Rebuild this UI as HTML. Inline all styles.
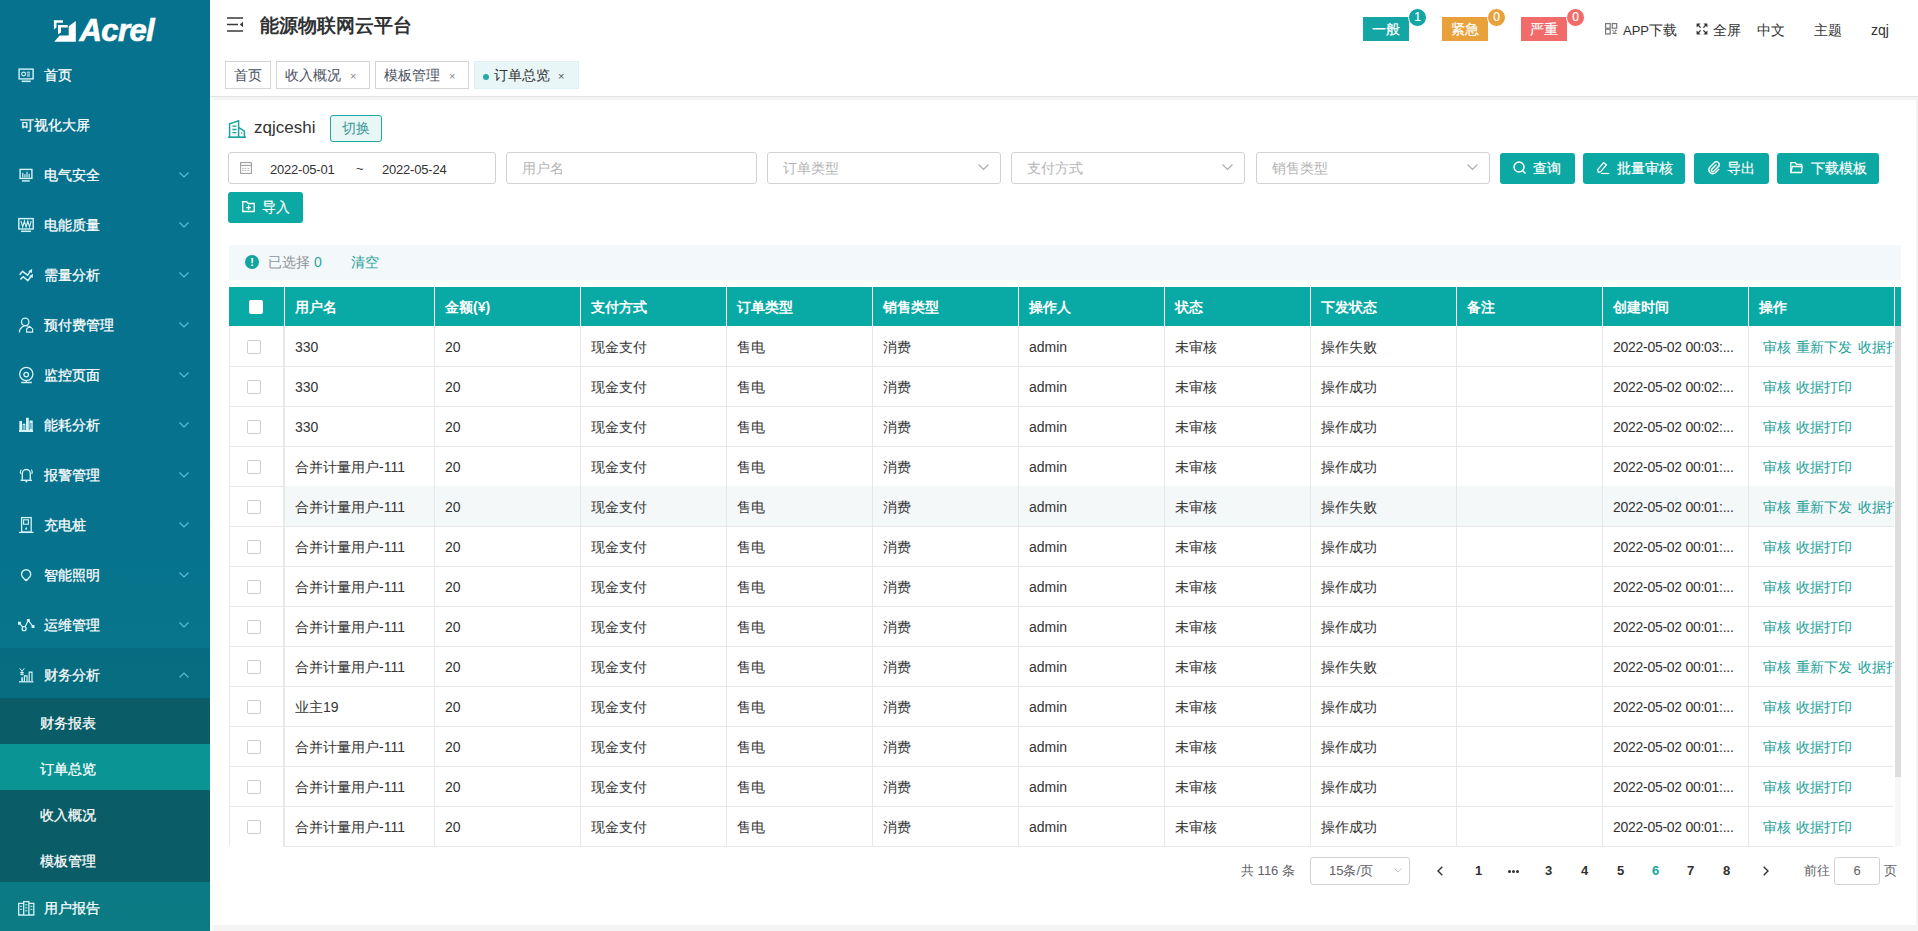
<!DOCTYPE html><html><head><meta charset="utf-8"><style>
*{margin:0;padding:0;box-sizing:border-box}
html,body{width:1918px;height:931px;overflow:hidden;background:#f4f4f4;font-family:"Liberation Sans",sans-serif;color:#333}
div,span{position:absolute;white-space:nowrap}
svg{position:absolute;overflow:visible}
#side{left:0;top:0;width:210px;height:931px;background:linear-gradient(180deg,#06728e 0%,#06728d 55%,#08768a 75%,#0c7b83 100%)}
.mt{color:#fff;font-size:14px;line-height:20px;-webkit-text-stroke:0.25px #fff}
.sub{left:0;width:210px;height:46px;background:#0a5d66}
#hdr{left:210px;top:0;width:1708px;height:97px;background:#fff;border-bottom:1px solid #e2e2e2}
#card{left:213px;top:100px;width:1703px;height:825px;background:#fff}
.tag{top:61px;height:28px;border:1px solid #d4d4d4;background:#fff;color:#495060;font-size:14px;line-height:28px}
.inp{top:152px;height:32px;border:1px solid #d2d2d2;border-radius:3px;background:#fff}
.ph{color:#b4b4b4;font-size:14px;line-height:20px;top:5px}
.btn{height:30.6px;background:#0ca8a3;border-radius:3px;color:#fff;font-size:14px;line-height:20px;-webkit-text-stroke:0.2px #fff}
.th{color:#fff;font-size:14px;font-weight:bold;line-height:20px}
.td{color:#333;font-size:14px;line-height:20px}
.op{color:#1d9f9a;font-size:14px;line-height:20px}
.pg{color:#303133;font-size:13px;font-weight:bold;line-height:20px}
</style></head><body>
<div id="side">
<svg style="left:50px;top:15px" width="30" height="30" viewBox="0 0 30 30"><path fill="#fff" d="M3.9 5.2H12.9V7.7H6.5V12.5L3.9 14.5Z"/><path fill="#fff" d="M8 10H17.7V12.6H11V17.5L8 19.5Z"/><path fill="#fff" d="M25.8 6.1V26.8H4.2L9.7 20.5H18.7V11.3Z"/></svg>
<div style="left:79.5px;top:14px;font-size:31px;line-height:34px;font-weight:bold;font-style:italic;color:#fff;letter-spacing:-0.6px;-webkit-text-stroke:0.7px #fff">Acrel</div>
<div style="left:0;top:648px;width:210px;height:50px;background:rgba(0,0,0,0.07)"></div>
<svg style="left:0;top:50px" width="50" height="50" viewBox="0 50 50 50" fill="none" stroke="#d2f3f9"><rect x="19.1" y="69.1" width="14" height="9.8" stroke-width="1.4"/><path d="M21.7 81.3h9" stroke-width="1.6"/><circle cx="23.6" cy="74" r="1.9" stroke-width="1.1"/><path d="M26.8 72.2h3.3M26.8 74.1h3.3M26.8 76h3.3" stroke-width="1"/></svg>
<div class="mt" style="left:44px;top:65px">首页</div>
<div class="mt" style="left:20px;top:115px">可视化大屏</div>
<svg style="left:0;top:150px" width="50" height="50" viewBox="0 150 50 50" fill="none" stroke="#d2f3f9"><rect x="20.1" y="169.4" width="11.8" height="9" stroke-width="1.4"/><path d="M22 180.9h7.7" stroke-width="1.5"/><path d="M22.8 172.8v4.6M24.9 174.3v3.1M27 171.8v5.6M29.2 173.8v3.6" stroke-width="1.2"/></svg>
<div class="mt" style="left:44px;top:165px">电气安全</div>
<svg style="left:179px;top:172px" width="10" height="6" viewBox="0 0 10 6"><path d="M0.5 0.5L5 5 9.5 0.5" fill="none" stroke="#5cc0d9" stroke-width="1.1"/></svg>
<svg style="left:0;top:200px" width="50" height="50" viewBox="0 200 50 50" fill="none" stroke="#d2f3f9"><rect x="18.8" y="218.6" width="14.4" height="10.4" stroke-width="1.4"/><path d="M21 231.3h10" stroke-width="1.5"/><path d="M21 221l1.7 6 1.7-6 1.7 6 1.7-6 1.7 6 1.7-6" stroke-width="1.1"/></svg>
<div class="mt" style="left:44px;top:215px">电能质量</div>
<svg style="left:179px;top:222px" width="10" height="6" viewBox="0 0 10 6"><path d="M0.5 0.5L5 5 9.5 0.5" fill="none" stroke="#5cc0d9" stroke-width="1.1"/></svg>
<svg style="left:0;top:250px" width="50" height="50" viewBox="0 250 50 50" fill="none" stroke="#d2f3f9"><path d="M19.6 274.8l3-3.5 4.9 3.9 3.4-4.6M20.4 279.4l2.9-2.6 4.5 3.8 4.1-5.4" stroke-width="1.5"/><path d="M32.2 268.8l-0.3 4.3-3.6-1.9z M33 273.8l-0.3 4.3-3.6-1.9z" fill="#d2f3f9" stroke="none"/></svg>
<div class="mt" style="left:44px;top:265px">需量分析</div>
<svg style="left:179px;top:272px" width="10" height="6" viewBox="0 0 10 6"><path d="M0.5 0.5L5 5 9.5 0.5" fill="none" stroke="#5cc0d9" stroke-width="1.1"/></svg>
<svg style="left:0;top:300px" width="50" height="50" viewBox="0 300 50 50" fill="none" stroke="#d2f3f9"><circle cx="25.2" cy="321.9" r="3.7" stroke-width="1.3"/><path d="M19.4 332.4a6.6 6.6 0 0 1 8.8-6.3" stroke-width="1.3"/><path d="M26.6 328.9l3-2.7 3 2.7v3.2h-6z" stroke-width="1.2"/></svg>
<div class="mt" style="left:44px;top:315px">预付费管理</div>
<svg style="left:179px;top:322px" width="10" height="6" viewBox="0 0 10 6"><path d="M0.5 0.5L5 5 9.5 0.5" fill="none" stroke="#5cc0d9" stroke-width="1.1"/></svg>
<svg style="left:0;top:350px" width="50" height="50" viewBox="0 350 50 50" fill="none" stroke="#d2f3f9"><circle cx="26.3" cy="374" r="6.6" stroke-width="1.3"/><circle cx="26.2" cy="374.6" r="2.3" stroke-width="1.3"/><path d="M21.2 382.5h10.6M26.3 380.6v1.9" stroke-width="1.3"/></svg>
<div class="mt" style="left:44px;top:365px">监控页面</div>
<svg style="left:179px;top:372px" width="10" height="6" viewBox="0 0 10 6"><path d="M0.5 0.5L5 5 9.5 0.5" fill="none" stroke="#5cc0d9" stroke-width="1.1"/></svg>
<svg style="left:0;top:400px" width="50" height="50" viewBox="0 400 50 50" fill="none" stroke="#d2f3f9"><path d="M19.3 421h2.7v10.5h-2.7zM22.6 423.8h2.7v7.7h-2.7zM26 417.8h2.8v13.7h-2.8zM29.5 420.5h3.2v11h-3.2zM19 430h14v2h-14z" fill="#d2f3f9" stroke="none"/><path d="M23.9 425v5M30.9 423v6" stroke="#0a6f8c" stroke-width="0.8"/></svg>
<div class="mt" style="left:44px;top:415px">能耗分析</div>
<svg style="left:179px;top:422px" width="10" height="6" viewBox="0 0 10 6"><path d="M0.5 0.5L5 5 9.5 0.5" fill="none" stroke="#5cc0d9" stroke-width="1.1"/></svg>
<svg style="left:0;top:450px" width="50" height="50" viewBox="0 450 50 50" fill="none" stroke="#d2f3f9"><path d="M22.3 479.8v-6.3a4 4 0 0 1 8 0v6.3" stroke-width="1.4"/><path d="M20.6 480.3h11.4" stroke-width="1.4"/><circle cx="26.3" cy="481.6" r="1" fill="#d2f3f9" stroke="none"/><path d="M21.2 469.5a4.5 4.5 0 0 0-0.4 4.5M31.4 469.5a4.5 4.5 0 0 1 0.4 4.5" stroke-width="1.1"/></svg>
<div class="mt" style="left:44px;top:465px">报警管理</div>
<svg style="left:179px;top:472px" width="10" height="6" viewBox="0 0 10 6"><path d="M0.5 0.5L5 5 9.5 0.5" fill="none" stroke="#5cc0d9" stroke-width="1.1"/></svg>
<svg style="left:0;top:500px" width="50" height="50" viewBox="0 500 50 50" fill="none" stroke="#d2f3f9"><rect x="21.6" y="517.6" width="9.6" height="14.4" stroke-width="1.3"/><rect x="23.6" y="519.8" width="4.8" height="4.4" stroke-width="1.1"/><path d="M26.4 526.8l-1.6 2.6h2.6z" fill="#d2f3f9" stroke="none"/><path d="M19 532.4h14.6" stroke-width="1.3"/></svg>
<div class="mt" style="left:44px;top:515px">充电桩</div>
<svg style="left:179px;top:522px" width="10" height="6" viewBox="0 0 10 6"><path d="M0.5 0.5L5 5 9.5 0.5" fill="none" stroke="#5cc0d9" stroke-width="1.1"/></svg>
<svg style="left:0;top:550px" width="50" height="50" viewBox="0 550 50 50" fill="none" stroke="#d2f3f9"><path d="M23.7 578.2a4.6 4.6 0 1 1 4.8 0l-1 1.4h-2.8z" stroke-width="1.4"/><circle cx="26.1" cy="580" r="1.3" fill="#d2f3f9" stroke="none"/></svg>
<div class="mt" style="left:44px;top:565px">智能照明</div>
<svg style="left:179px;top:572px" width="10" height="6" viewBox="0 0 10 6"><path d="M0.5 0.5L5 5 9.5 0.5" fill="none" stroke="#5cc0d9" stroke-width="1.1"/></svg>
<svg style="left:0;top:600px" width="50" height="50" viewBox="0 600 50 50" fill="none" stroke="#d2f3f9"><path d="M19.4 623.2l4.7 5.5 4.2-8.4 4.7 6.2" stroke-width="1.2"/><path d="M18 621.8h2.9v2.9h-2.9zM26.9 618.9h2.9v2.9h-2.9zM31.6 625.1h2.9v2.9h-2.9z" fill="#d2f3f9" stroke="none"/><circle cx="24.1" cy="628.7" r="2" fill="#096f88" stroke-width="1.3"/></svg>
<div class="mt" style="left:44px;top:615px">运维管理</div>
<svg style="left:179px;top:622px" width="10" height="6" viewBox="0 0 10 6"><path d="M0.5 0.5L5 5 9.5 0.5" fill="none" stroke="#5cc0d9" stroke-width="1.1"/></svg>
<svg style="left:0;top:650px" width="50" height="50" viewBox="0 650 50 50" fill="none" stroke="#d2f3f9"><path d="M19.7 668.3l2.3 3 2.3-3M22 671.3v4.2M20.2 672.6h3.6M20.2 674.2h3.6" stroke-width="1"/><path d="M21.3 677.2h1.6v4h-1.6z" fill="#d2f3f9" stroke="none"/><path d="M24.4 681.2v-5.3h2.6v5.3M29.2 681.2v-9h2.8v9" stroke-width="1.2"/><path d="M19 681.8h14.4" stroke-width="1.3"/></svg>
<div class="mt" style="left:44px;top:665px">财务分析</div>
<svg style="left:179px;top:672px" width="10" height="6" viewBox="0 0 10 6"><path d="M0.5 5.5L5 1 9.5 5.5" fill="none" stroke="#5cc0d9" stroke-width="1.1"/></svg>
<div class="sub" style="top:698px;background:#0a5d66"><div class="mt" style="left:40px;top:15px">财务报表</div></div>
<div class="sub" style="top:744px;background:#0a9594"><div class="mt" style="left:40px;top:15px">订单总览</div></div>
<div class="sub" style="top:790px;background:#0a5d66"><div class="mt" style="left:40px;top:15px">收入概况</div></div>
<div class="sub" style="top:836px;background:#0a5d66"><div class="mt" style="left:40px;top:15px">模板管理</div></div>
<svg style="left:0;top:883px" width="50" height="50" viewBox="0 883 50 50" fill="none" stroke="#d2f3f9"><path d="M18.7 903.3h5v11.7h-5zM23.7 901.7h5.2v13.5h-5.2zM28.9 903.3h4.9v11.7h-4.9z" stroke-width="1.3"/><path d="M20.2 906.3h2M20.2 909.3h2M25.2 904.8h2.2M25.2 907.8h2.2M25.2 910.8h2.2M30.4 906.3h2M30.4 909.3h2" stroke-width="1"/></svg>
<div class="mt" style="left:44px;top:898px">用户报告</div>
</div>
<div id="hdr"></div>
<svg style="left:227px;top:17px" width="17" height="15" viewBox="0 0 17 15"><path d="M0 1h16M0 7.5h11M0 14h16" stroke="#3a3a3a" stroke-width="1.5"/><path d="M16 4.8v5.4l-3.2-2.7z" fill="#3a3a3a"/></svg>
<div style="left:260px;top:14px;font-size:19px;line-height:24px;font-weight:bold;color:#303133">能源物联网云平台</div>
<div class="tag" style="left:225px;width:46px"></div>
<div class="tag" style="left:234px;border:0;background:none">首页</div>
<div class="tag" style="left:276px;width:94px"></div>
<div class="tag" style="left:285px;border:0;background:none">收入概况</div>
<div style="left:350px;top:65.5px;font-size:11px;line-height:20px;color:#888">×</div>
<div class="tag" style="left:375px;width:94px"></div>
<div class="tag" style="left:384px;border:0;background:none">模板管理</div>
<div style="left:449px;top:65.5px;font-size:11px;line-height:20px;color:#888">×</div>
<div class="tag" style="left:474px;width:105px;background:#e8f6f7;border-color:#dff1f2;color:#333"></div>
<div style="left:483px;top:73.5px;width:6px;height:6px;border-radius:3px;background:#26aaa5"></div>
<div class="tag" style="left:494px;border:0;background:none;color:#333">订单总览</div>
<div style="left:558px;top:65.5px;font-size:11px;line-height:20px;color:#555">×</div>
<div style="left:1363px;top:17px;width:46px;height:24px;background:#13a6a4;color:#fff;font-size:14px;line-height:24px;text-align:center;-webkit-text-stroke:0.2px #fff">一般</div>
<div style="left:1408px;top:7.5px;width:19px;height:19px;border-radius:10px;background:#13a6a4;border:1px solid #fff;color:#fff;font-size:12px;line-height:16px;text-align:center;-webkit-text-stroke:0.2px #fff">1</div>
<div style="left:1442px;top:17px;width:46px;height:24px;background:#e9a23b;color:#fff;font-size:14px;line-height:24px;text-align:center;-webkit-text-stroke:0.2px #fff">紧急</div>
<div style="left:1487px;top:7.5px;width:19px;height:19px;border-radius:10px;background:#e9a23b;border:1px solid #fff;color:#fff;font-size:12px;line-height:16px;text-align:center;-webkit-text-stroke:0.2px #fff">0</div>
<div style="left:1521px;top:17px;width:46px;height:24px;background:#f26b6b;color:#fff;font-size:14px;line-height:24px;text-align:center;-webkit-text-stroke:0.2px #fff">严重</div>
<div style="left:1566px;top:7.5px;width:19px;height:19px;border-radius:10px;background:#f26b6b;border:1px solid #fff;color:#fff;font-size:12px;line-height:16px;text-align:center;-webkit-text-stroke:0.2px #fff">0</div>
<svg style="left:1604px;top:22px" width="14" height="13" viewBox="0 0 14 13"><rect x="1.6" y="1.6" width="4.6" height="4.6" fill="none" stroke="#777" stroke-width="1.2"/><rect x="1.6" y="7.2" width="4.6" height="4.8" fill="none" stroke="#777" stroke-width="1.2"/><rect x="8.3" y="1.6" width="4.4" height="4.6" fill="none" stroke="#777" stroke-width="1.2"/><path d="M8.3 8.4h1.2M11 8.4h1.7M8.3 11.5h4.4M9 10h3" stroke="#777" stroke-width="1.1"/></svg>
<div style="left:1623px;top:20px;font-size:14px;line-height:20px;color:#333"><span style="position:static;font-size:13px">APP</span>下载</div>
<svg style="left:1696px;top:23px" width="12" height="12" viewBox="0 0 12 12"><path d="M0.6 0.6h4L0.6 4.6z M11.4 0.6h-4l4 4z M0.6 11.4v-4l4 4z M11.4 11.4h-4l4-4z" fill="#333"/><path d="M2 2l2.6 2.6M10 2L7.4 4.6M2 10l2.6-2.6M10 10L7.4 7.4" stroke="#333" stroke-width="1.3"/></svg>
<div style="left:1713px;top:20px;font-size:14px;line-height:20px;color:#333">全屏</div>
<div style="left:1757px;top:20px;font-size:14px;line-height:20px;color:#333">中文</div>
<div style="left:1814px;top:20px;font-size:14px;line-height:20px;color:#333">主题</div>
<div style="left:1871px;top:20px;font-size:14px;line-height:20px;color:#333">zqj</div>
<div id="card"></div>
<div style="left:210px;top:97px;width:3px;height:834px;background:#fcfcfc"></div>
<svg style="left:0;top:0" width="260" height="150" viewBox="0 0 260 150" fill="none" stroke="#1ba39c"><path d="M229.6 137V123.9L238.6 120.7V137M238.6 127.3L244.4 131.1V137" stroke-width="1.5"/><path d="M228.2 137.2h17.7" stroke-width="1.7"/><path d="M232.4 126.2h4.1M232.4 129.5h4.1M232.4 132.7h4.1" stroke-width="1.3"/><circle cx="241.6" cy="133" r="0.8" fill="#1ba39c" stroke="none"/></svg>
<div style="left:254px;top:117px;font-size:17px;line-height:22px;color:#333">zqjceshi</div>
<div style="left:330px;top:115px;width:52px;height:27px;background:#e8f6f6;border:1px solid #20a9a4;border-radius:3px;color:#3d9895;font-size:14px;line-height:25px;text-align:center">切换</div>
<div class="inp" style="left:228px;width:268px"></div>
<svg style="left:240px;top:162px" width="12" height="12" viewBox="0 0 12 12"><rect x="0.6" y="0.6" width="10.8" height="10.8" fill="none" stroke="#a0a0a0" stroke-width="1.1"/><path d="M0.6 3.4h10.8" stroke="#a0a0a0" stroke-width="1.1"/><path d="M2.2 6.4h1.6M4.8 6.4h1.6M7.6 6.4h1.6M2.2 8.5h1.6M4.8 8.5h1.6M7.6 8.5h1.6" stroke="#a8a8a8" stroke-width="0.9"/></svg>
<div style="left:270px;top:160px;font-size:13px;line-height:20px;color:#333;letter-spacing:-0.2px">2022-05-01</div>
<div style="left:356px;top:159px;font-size:13px;line-height:20px;color:#333">~</div>
<div style="left:382px;top:160px;font-size:13px;line-height:20px;color:#333;letter-spacing:-0.2px">2022-05-24</div>
<div class="inp" style="left:506px;width:251px"><div class="ph" style="left:15px">用户名</div></div>
<div class="inp" style="left:767px;width:234px"><div class="ph" style="left:15px">订单类型</div></div>
<svg style="left:978px;top:164px" width="11" height="6" viewBox="0 0 11 6"><path d="M0.5 0.5L5.5 5.5 10.5 0.5" fill="none" stroke="#a8abb2" stroke-width="1.1"/></svg>
<div class="inp" style="left:1011px;width:234px"><div class="ph" style="left:15px">支付方式</div></div>
<svg style="left:1222px;top:164px" width="11" height="6" viewBox="0 0 11 6"><path d="M0.5 0.5L5.5 5.5 10.5 0.5" fill="none" stroke="#a8abb2" stroke-width="1.1"/></svg>
<div class="inp" style="left:1256px;width:234px"><div class="ph" style="left:15px">销售类型</div></div>
<svg style="left:1467px;top:164px" width="11" height="6" viewBox="0 0 11 6"><path d="M0.5 0.5L5.5 5.5 10.5 0.5" fill="none" stroke="#a8abb2" stroke-width="1.1"/></svg>
<div class="btn" style="left:1500px;top:153px;width:75px"></div>
<svg style="left:1513px;top:161px" width="14" height="14" viewBox="0 0 14 14"><circle cx="6" cy="6" r="5" fill="none" stroke="#fff" stroke-width="1.5"/><path d="M9.5 9.5l3 3" stroke="#fff" stroke-width="1.5"/></svg>
<div class="btn" style="left:1533px;top:158px;background:none;height:20px">查询</div>
<div class="btn" style="left:1583px;top:153px;width:102px"></div>
<svg style="left:1596px;top:161px" width="14" height="14" viewBox="0 0 14 14"><path d="M2.3 11.3L1.7 8.6 7.6 1.6 10.4 3.9 4.5 10.9Z" fill="none" stroke="#fff" stroke-width="1.3"/><path d="M5.2 12.5H13.3" stroke="#fff" stroke-width="1.2"/></svg>
<div class="btn" style="left:1617px;top:158px;background:none;height:20px">批量审核</div>
<div class="btn" style="left:1694px;top:153px;width:75px"></div>
<svg style="left:1707px;top:161px" width="14" height="14" viewBox="0 0 14 14"><path d="M9.5 3.5L4.5 8.5a1.5 1.5 0 0 0 2 2l5.5-5.5a3 3 0 0 0-4-4L2.5 6.5a4 4 0 0 0 5.5 5.5l4-4" fill="none" stroke="#fff" stroke-width="1.4"/></svg>
<div class="btn" style="left:1727px;top:158px;background:none;height:20px">导出</div>
<div class="btn" style="left:1777px;top:153px;width:102px"></div>
<svg style="left:1790px;top:161px" width="14" height="14" viewBox="0 0 14 14"><path d="M0.8 11.5V1.6h4.4l1.5 1.8h4.9v1.9" fill="none" stroke="#fff" stroke-width="1.3"/><path d="M2.3 5.5h9.9l-0.7 6H0.8z" fill="none" stroke="#fff" stroke-width="1.3"/></svg>
<div class="btn" style="left:1811px;top:158px;background:none;height:20px">下载模板</div>
<div class="btn" style="left:228px;top:192px;width:75px"></div>
<svg style="left:241px;top:200px" width="14" height="14" viewBox="0 0 14 14"><path d="M1.7 1.7h4l1.5 1.8h6v8H1.7z" fill="none" stroke="#fff" stroke-width="1.4"/><path d="M7.6 5.3v4.6M5.3 7.6h4.6" stroke="#fff" stroke-width="1.4"/></svg>
<div class="btn" style="left:262px;top:197px;background:none;height:20px">导入</div>
<div style="left:229px;top:245px;width:1672px;height:35px;background:#f3f9fa"></div>
<div style="left:245px;top:255px;width:14px;height:14px;border-radius:7px;background:#15a59f;color:#fff;font-size:11px;line-height:15px;text-align:center;font-weight:bold">!</div>
<div style="left:268px;top:252px;font-size:14px;line-height:20px;color:#909399">已选择 <span style="position:static;color:#26a6a0">0</span></div>
<div style="left:351px;top:252px;font-size:14px;line-height:20px;color:#1d9f9a">清空</div>
<div style="left:229px;top:287px;width:1672px;height:39px;background:#09a9a5"></div>
<div style="left:284px;top:287px;width:1px;height:39px;background:#fff"></div>
<div style="left:434px;top:287px;width:1px;height:39px;background:#fff"></div>
<div style="left:580px;top:287px;width:1px;height:39px;background:#fff"></div>
<div style="left:726px;top:287px;width:1px;height:39px;background:#fff"></div>
<div style="left:872px;top:287px;width:1px;height:39px;background:#fff"></div>
<div style="left:1018px;top:287px;width:1px;height:39px;background:#fff"></div>
<div style="left:1164px;top:287px;width:1px;height:39px;background:#fff"></div>
<div style="left:1310px;top:287px;width:1px;height:39px;background:#fff"></div>
<div style="left:1456px;top:287px;width:1px;height:39px;background:#fff"></div>
<div style="left:1602px;top:287px;width:1px;height:39px;background:#fff"></div>
<div style="left:1748px;top:287px;width:1px;height:39px;background:#fff"></div>
<div style="left:1894px;top:287px;width:1px;height:39px;background:#fff"></div>
<div class="th" style="left:295px;top:297px">用户名</div>
<div class="th" style="left:445px;top:297px">金额(¥)</div>
<div class="th" style="left:591px;top:297px">支付方式</div>
<div class="th" style="left:737px;top:297px">订单类型</div>
<div class="th" style="left:883px;top:297px">销售类型</div>
<div class="th" style="left:1029px;top:297px">操作人</div>
<div class="th" style="left:1175px;top:297px">状态</div>
<div class="th" style="left:1321px;top:297px">下发状态</div>
<div class="th" style="left:1467px;top:297px">备注</div>
<div class="th" style="left:1613px;top:297px">创建时间</div>
<div class="th" style="left:1759px;top:297px">操作</div>
<div style="left:249px;top:300px;width:14px;height:14px;background:#fff;border-radius:2px"></div>
<div style="left:229px;top:366px;width:1665px;height:1px;background:#e8e8e8"></div>
<div style="left:247px;top:340px;width:14px;height:14px;border:1px solid #cfcfcf;border-radius:2px;background:#fff"></div>
<div class="td" style="left:295px;top:337px">330</div>
<div class="td" style="left:445px;top:337px">20</div>
<div class="td" style="left:591px;top:337px">现金支付</div>
<div class="td" style="left:737px;top:337px">售电</div>
<div class="td" style="left:883px;top:337px">消费</div>
<div class="td" style="left:1029px;top:337px">admin</div>
<div class="td" style="left:1175px;top:337px">未审核</div>
<div class="td" style="left:1321px;top:337px">操作失败</div>
<div class="td" style="left:1613px;top:337px;letter-spacing:-0.28px">2022-05-02 00:03:...</div>
<div style="left:1749px;top:337px;width:145px;height:20px;overflow:hidden"><div class="op" style="left:14px;top:0">审核</div><div class="op" style="left:47px;top:0">重新下发</div><div class="op" style="left:109px;top:0">收据打印</div></div>
<div style="left:229px;top:406px;width:1665px;height:1px;background:#e8e8e8"></div>
<div style="left:247px;top:380px;width:14px;height:14px;border:1px solid #cfcfcf;border-radius:2px;background:#fff"></div>
<div class="td" style="left:295px;top:377px">330</div>
<div class="td" style="left:445px;top:377px">20</div>
<div class="td" style="left:591px;top:377px">现金支付</div>
<div class="td" style="left:737px;top:377px">售电</div>
<div class="td" style="left:883px;top:377px">消费</div>
<div class="td" style="left:1029px;top:377px">admin</div>
<div class="td" style="left:1175px;top:377px">未审核</div>
<div class="td" style="left:1321px;top:377px">操作成功</div>
<div class="td" style="left:1613px;top:377px;letter-spacing:-0.28px">2022-05-02 00:02:...</div>
<div class="op" style="left:1763px;top:377px">审核</div><div class="op" style="left:1796px;top:377px">收据打印</div>
<div style="left:229px;top:446px;width:1665px;height:1px;background:#e8e8e8"></div>
<div style="left:247px;top:420px;width:14px;height:14px;border:1px solid #cfcfcf;border-radius:2px;background:#fff"></div>
<div class="td" style="left:295px;top:417px">330</div>
<div class="td" style="left:445px;top:417px">20</div>
<div class="td" style="left:591px;top:417px">现金支付</div>
<div class="td" style="left:737px;top:417px">售电</div>
<div class="td" style="left:883px;top:417px">消费</div>
<div class="td" style="left:1029px;top:417px">admin</div>
<div class="td" style="left:1175px;top:417px">未审核</div>
<div class="td" style="left:1321px;top:417px">操作成功</div>
<div class="td" style="left:1613px;top:417px;letter-spacing:-0.28px">2022-05-02 00:02:...</div>
<div class="op" style="left:1763px;top:417px">审核</div><div class="op" style="left:1796px;top:417px">收据打印</div>
<div style="left:229px;top:486px;width:1665px;height:1px;background:#e8e8e8"></div>
<div style="left:247px;top:460px;width:14px;height:14px;border:1px solid #cfcfcf;border-radius:2px;background:#fff"></div>
<div class="td" style="left:295px;top:457px">合并计量用户-111</div>
<div class="td" style="left:445px;top:457px">20</div>
<div class="td" style="left:591px;top:457px">现金支付</div>
<div class="td" style="left:737px;top:457px">售电</div>
<div class="td" style="left:883px;top:457px">消费</div>
<div class="td" style="left:1029px;top:457px">admin</div>
<div class="td" style="left:1175px;top:457px">未审核</div>
<div class="td" style="left:1321px;top:457px">操作成功</div>
<div class="td" style="left:1613px;top:457px;letter-spacing:-0.28px">2022-05-02 00:01:...</div>
<div class="op" style="left:1763px;top:457px">审核</div><div class="op" style="left:1796px;top:457px">收据打印</div>
<div style="left:285px;top:486px;width:1609px;height:40px;background:#f5f8f9"></div>
<div style="left:229px;top:526px;width:1665px;height:1px;background:#e8e8e8"></div>
<div style="left:247px;top:500px;width:14px;height:14px;border:1px solid #cfcfcf;border-radius:2px;background:#fff"></div>
<div class="td" style="left:295px;top:497px">合并计量用户-111</div>
<div class="td" style="left:445px;top:497px">20</div>
<div class="td" style="left:591px;top:497px">现金支付</div>
<div class="td" style="left:737px;top:497px">售电</div>
<div class="td" style="left:883px;top:497px">消费</div>
<div class="td" style="left:1029px;top:497px">admin</div>
<div class="td" style="left:1175px;top:497px">未审核</div>
<div class="td" style="left:1321px;top:497px">操作失败</div>
<div class="td" style="left:1613px;top:497px;letter-spacing:-0.28px">2022-05-02 00:01:...</div>
<div style="left:1749px;top:497px;width:145px;height:20px;overflow:hidden"><div class="op" style="left:14px;top:0">审核</div><div class="op" style="left:47px;top:0">重新下发</div><div class="op" style="left:109px;top:0">收据打印</div></div>
<div style="left:229px;top:566px;width:1665px;height:1px;background:#e8e8e8"></div>
<div style="left:247px;top:540px;width:14px;height:14px;border:1px solid #cfcfcf;border-radius:2px;background:#fff"></div>
<div class="td" style="left:295px;top:537px">合并计量用户-111</div>
<div class="td" style="left:445px;top:537px">20</div>
<div class="td" style="left:591px;top:537px">现金支付</div>
<div class="td" style="left:737px;top:537px">售电</div>
<div class="td" style="left:883px;top:537px">消费</div>
<div class="td" style="left:1029px;top:537px">admin</div>
<div class="td" style="left:1175px;top:537px">未审核</div>
<div class="td" style="left:1321px;top:537px">操作成功</div>
<div class="td" style="left:1613px;top:537px;letter-spacing:-0.28px">2022-05-02 00:01:...</div>
<div class="op" style="left:1763px;top:537px">审核</div><div class="op" style="left:1796px;top:537px">收据打印</div>
<div style="left:229px;top:606px;width:1665px;height:1px;background:#e8e8e8"></div>
<div style="left:247px;top:580px;width:14px;height:14px;border:1px solid #cfcfcf;border-radius:2px;background:#fff"></div>
<div class="td" style="left:295px;top:577px">合并计量用户-111</div>
<div class="td" style="left:445px;top:577px">20</div>
<div class="td" style="left:591px;top:577px">现金支付</div>
<div class="td" style="left:737px;top:577px">售电</div>
<div class="td" style="left:883px;top:577px">消费</div>
<div class="td" style="left:1029px;top:577px">admin</div>
<div class="td" style="left:1175px;top:577px">未审核</div>
<div class="td" style="left:1321px;top:577px">操作成功</div>
<div class="td" style="left:1613px;top:577px;letter-spacing:-0.28px">2022-05-02 00:01:...</div>
<div class="op" style="left:1763px;top:577px">审核</div><div class="op" style="left:1796px;top:577px">收据打印</div>
<div style="left:229px;top:646px;width:1665px;height:1px;background:#e8e8e8"></div>
<div style="left:247px;top:620px;width:14px;height:14px;border:1px solid #cfcfcf;border-radius:2px;background:#fff"></div>
<div class="td" style="left:295px;top:617px">合并计量用户-111</div>
<div class="td" style="left:445px;top:617px">20</div>
<div class="td" style="left:591px;top:617px">现金支付</div>
<div class="td" style="left:737px;top:617px">售电</div>
<div class="td" style="left:883px;top:617px">消费</div>
<div class="td" style="left:1029px;top:617px">admin</div>
<div class="td" style="left:1175px;top:617px">未审核</div>
<div class="td" style="left:1321px;top:617px">操作成功</div>
<div class="td" style="left:1613px;top:617px;letter-spacing:-0.28px">2022-05-02 00:01:...</div>
<div class="op" style="left:1763px;top:617px">审核</div><div class="op" style="left:1796px;top:617px">收据打印</div>
<div style="left:229px;top:686px;width:1665px;height:1px;background:#e8e8e8"></div>
<div style="left:247px;top:660px;width:14px;height:14px;border:1px solid #cfcfcf;border-radius:2px;background:#fff"></div>
<div class="td" style="left:295px;top:657px">合并计量用户-111</div>
<div class="td" style="left:445px;top:657px">20</div>
<div class="td" style="left:591px;top:657px">现金支付</div>
<div class="td" style="left:737px;top:657px">售电</div>
<div class="td" style="left:883px;top:657px">消费</div>
<div class="td" style="left:1029px;top:657px">admin</div>
<div class="td" style="left:1175px;top:657px">未审核</div>
<div class="td" style="left:1321px;top:657px">操作失败</div>
<div class="td" style="left:1613px;top:657px;letter-spacing:-0.28px">2022-05-02 00:01:...</div>
<div style="left:1749px;top:657px;width:145px;height:20px;overflow:hidden"><div class="op" style="left:14px;top:0">审核</div><div class="op" style="left:47px;top:0">重新下发</div><div class="op" style="left:109px;top:0">收据打印</div></div>
<div style="left:229px;top:726px;width:1665px;height:1px;background:#e8e8e8"></div>
<div style="left:247px;top:700px;width:14px;height:14px;border:1px solid #cfcfcf;border-radius:2px;background:#fff"></div>
<div class="td" style="left:295px;top:697px">业主19</div>
<div class="td" style="left:445px;top:697px">20</div>
<div class="td" style="left:591px;top:697px">现金支付</div>
<div class="td" style="left:737px;top:697px">售电</div>
<div class="td" style="left:883px;top:697px">消费</div>
<div class="td" style="left:1029px;top:697px">admin</div>
<div class="td" style="left:1175px;top:697px">未审核</div>
<div class="td" style="left:1321px;top:697px">操作成功</div>
<div class="td" style="left:1613px;top:697px;letter-spacing:-0.28px">2022-05-02 00:01:...</div>
<div class="op" style="left:1763px;top:697px">审核</div><div class="op" style="left:1796px;top:697px">收据打印</div>
<div style="left:229px;top:766px;width:1665px;height:1px;background:#e8e8e8"></div>
<div style="left:247px;top:740px;width:14px;height:14px;border:1px solid #cfcfcf;border-radius:2px;background:#fff"></div>
<div class="td" style="left:295px;top:737px">合并计量用户-111</div>
<div class="td" style="left:445px;top:737px">20</div>
<div class="td" style="left:591px;top:737px">现金支付</div>
<div class="td" style="left:737px;top:737px">售电</div>
<div class="td" style="left:883px;top:737px">消费</div>
<div class="td" style="left:1029px;top:737px">admin</div>
<div class="td" style="left:1175px;top:737px">未审核</div>
<div class="td" style="left:1321px;top:737px">操作成功</div>
<div class="td" style="left:1613px;top:737px;letter-spacing:-0.28px">2022-05-02 00:01:...</div>
<div class="op" style="left:1763px;top:737px">审核</div><div class="op" style="left:1796px;top:737px">收据打印</div>
<div style="left:229px;top:806px;width:1665px;height:1px;background:#e8e8e8"></div>
<div style="left:247px;top:780px;width:14px;height:14px;border:1px solid #cfcfcf;border-radius:2px;background:#fff"></div>
<div class="td" style="left:295px;top:777px">合并计量用户-111</div>
<div class="td" style="left:445px;top:777px">20</div>
<div class="td" style="left:591px;top:777px">现金支付</div>
<div class="td" style="left:737px;top:777px">售电</div>
<div class="td" style="left:883px;top:777px">消费</div>
<div class="td" style="left:1029px;top:777px">admin</div>
<div class="td" style="left:1175px;top:777px">未审核</div>
<div class="td" style="left:1321px;top:777px">操作成功</div>
<div class="td" style="left:1613px;top:777px;letter-spacing:-0.28px">2022-05-02 00:01:...</div>
<div class="op" style="left:1763px;top:777px">审核</div><div class="op" style="left:1796px;top:777px">收据打印</div>
<div style="left:283px;top:846px;width:1611px;height:1px;background:#e8e8e8"></div>
<div style="left:247px;top:820px;width:14px;height:14px;border:1px solid #cfcfcf;border-radius:2px;background:#fff"></div>
<div class="td" style="left:295px;top:817px">合并计量用户-111</div>
<div class="td" style="left:445px;top:817px">20</div>
<div class="td" style="left:591px;top:817px">现金支付</div>
<div class="td" style="left:737px;top:817px">售电</div>
<div class="td" style="left:883px;top:817px">消费</div>
<div class="td" style="left:1029px;top:817px">admin</div>
<div class="td" style="left:1175px;top:817px">未审核</div>
<div class="td" style="left:1321px;top:817px">操作成功</div>
<div class="td" style="left:1613px;top:817px;letter-spacing:-0.28px">2022-05-02 00:01:...</div>
<div class="op" style="left:1763px;top:817px">审核</div><div class="op" style="left:1796px;top:817px">收据打印</div>
<div style="left:284px;top:326px;width:1px;height:520px;background:#e8e8e8"></div>
<div style="left:434px;top:326px;width:1px;height:520px;background:#e8e8e8"></div>
<div style="left:580px;top:326px;width:1px;height:520px;background:#e8e8e8"></div>
<div style="left:726px;top:326px;width:1px;height:520px;background:#e8e8e8"></div>
<div style="left:872px;top:326px;width:1px;height:520px;background:#e8e8e8"></div>
<div style="left:1018px;top:326px;width:1px;height:520px;background:#e8e8e8"></div>
<div style="left:1164px;top:326px;width:1px;height:520px;background:#e8e8e8"></div>
<div style="left:1310px;top:326px;width:1px;height:520px;background:#e8e8e8"></div>
<div style="left:1456px;top:326px;width:1px;height:520px;background:#e8e8e8"></div>
<div style="left:1602px;top:326px;width:1px;height:520px;background:#e8e8e8"></div>
<div style="left:1748px;top:326px;width:1px;height:520px;background:#e8e8e8"></div>
<div style="left:1894px;top:326px;width:1px;height:520px;background:#e8e8e8"></div>
<div style="left:229px;top:326px;width:1px;height:520px;background:#e8e8e8"></div>
<div style="left:283px;top:326px;width:2px;height:520px;background:#e6e8ec"></div>
<div style="left:1894px;top:326px;width:22px;height:520px;background:#fff"></div>
<div style="left:1895px;top:326px;width:6px;height:520px;background:#f7f7f7"></div>
<div style="left:1895px;top:326px;width:6px;height:451px;background:#dddddd"></div>
<div style="left:1241px;top:861px;font-size:13px;line-height:20px;color:#606266">共 116 条</div>
<div style="left:1310px;top:857px;width:100px;height:28px;border:1px solid #d2d2d2;border-radius:3px"></div>
<div style="left:1329px;top:861px;font-size:13px;line-height:20px;color:#606266">15条/页</div>
<svg style="left:1394px;top:868px" width="8" height="5" viewBox="0 0 8 5"><path d="M0.5 0.5L4 4 7.5 0.5" fill="none" stroke="#c0c4cc" stroke-width="1"/></svg>
<svg style="left:1437px;top:866px" width="6" height="10" viewBox="0 0 6 10"><path d="M5.3 0.7L1 5 5.3 9.3" fill="none" stroke="#303133" stroke-width="1.4"/></svg>
<div class="pg" style="left:1475px;top:861px;color:#303133">1</div>
<div class="pg" style="left:1545px;top:861px;color:#303133">3</div>
<div class="pg" style="left:1581px;top:861px;color:#303133">4</div>
<div class="pg" style="left:1617px;top:861px;color:#303133">5</div>
<div class="pg" style="left:1652px;top:861px;color:#16a6a0">6</div>
<div class="pg" style="left:1687px;top:861px;color:#303133">7</div>
<div class="pg" style="left:1723px;top:861px;color:#303133">8</div>
<div style="left:1508px;top:870px;width:3px;height:3px;border-radius:2px;background:#303133"></div>
<div style="left:1512px;top:870px;width:3px;height:3px;border-radius:2px;background:#303133"></div>
<div style="left:1516px;top:870px;width:3px;height:3px;border-radius:2px;background:#303133"></div>
<svg style="left:1763px;top:866px" width="6" height="10" viewBox="0 0 6 10"><path d="M0.7 0.7L5 5 0.7 9.3" fill="none" stroke="#303133" stroke-width="1.4"/></svg>
<div style="left:1804px;top:861px;font-size:13px;line-height:20px;color:#606266">前往</div>
<div style="left:1834px;top:857px;width:46px;height:28px;border:1px solid #d2d2d2;border-radius:3px;font-size:13px;line-height:26px;text-align:center;color:#606266">6</div>
<div style="left:1884px;top:861px;font-size:13px;line-height:20px;color:#606266">页</div>
</body></html>
